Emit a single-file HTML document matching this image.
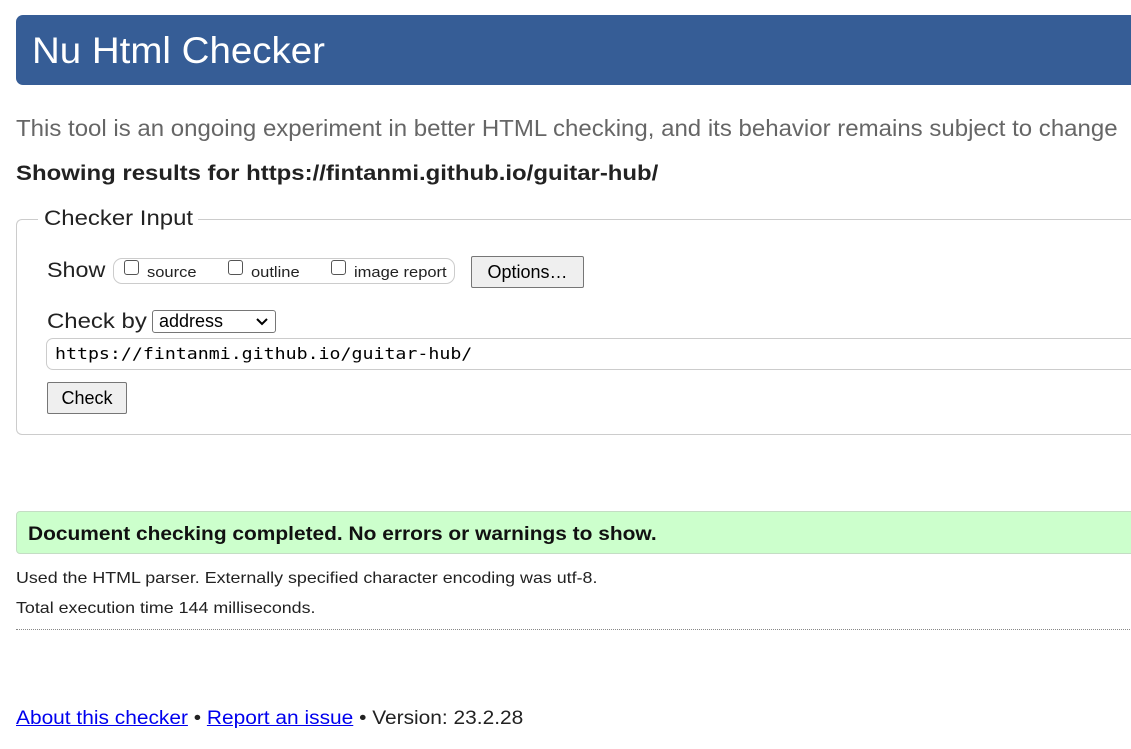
<!DOCTYPE html>
<html><head><style>
body{margin:0;width:1131px;height:749px;overflow:hidden;background:#fff;font-family:"Liberation Sans",Arial,sans-serif;position:relative}
.a{position:absolute;white-space:nowrap;transform-origin:0 0}
.cb{display:inline-block;width:13px;height:13px;border:1px solid #555;border-radius:3px;background:#fff;position:absolute}
.btn{position:absolute;background:#efefef;border:1px solid #767676;border-radius:2px;font-size:18px;color:#000;text-align:center}
</style></head><body>
<div class="a" style="left:16px;top:15px;width:1130px;height:70px;background:#365d96;border-radius:7px 0 0 7px"></div>
<div class="a" style="left:32px;top:30px;font-size:37px;color:#fff;transform:scaleX(1.04)">Nu Html Checker</div>
<div class="a" style="left:16px;top:115px;font-size:23px;color:#666;transform:scaleX(1.044)">This tool is an ongoing experiment in better HTML checking, and its behavior remains subject to change</div>
<div class="a" style="left:16px;top:162px;font-size:21px;font-weight:bold;color:#222;transform:scaleX(1.14)">Showing results for https://fintanmi.github.io/guitar-hub/</div>
<div class="a" style="left:16px;top:219px;width:1130px;height:216px;border:1px solid #ccc;border-right:none;border-radius:6px 0 0 6px;box-sizing:border-box"></div>
<div class="a" style="left:38px;top:205px;width:160px;height:28px;background:#fff"></div>
<div class="a" style="left:44px;top:207px;font-size:21px;color:#222;transform:scaleX(1.14)">Checker Input</div>
<div class="a" style="left:47px;top:259px;font-size:21px;color:#222;transform:scaleX(1.11)">Show</div>
<div class="a" style="left:113px;top:258px;width:342px;height:26px;border:1px solid #ccc;border-radius:9px;box-sizing:border-box"></div>
<span class="cb" style="left:124px;top:260px"></span><div class="a" style="left:147px;top:264px;font-size:15px;color:#222;transform:scaleX(1.1)">source</div>
<span class="cb" style="left:228px;top:260px"></span><div class="a" style="left:251px;top:264px;font-size:15px;color:#222;transform:scaleX(1.1)">outline</div>
<span class="cb" style="left:331px;top:260px"></span><div class="a" style="left:354px;top:264px;font-size:15px;color:#222;transform:scaleX(1.1)">image report</div>
<div class="btn" style="left:471px;top:256px;width:111px;height:30px;line-height:30px">Options…</div>
<div class="a" style="left:47px;top:310px;font-size:21px;color:#222;transform:scaleX(1.14)">Check by</div>
<div class="a" style="left:152px;top:310px;width:124px;height:23px;border:1px solid #767676;border-radius:3px;box-sizing:border-box;font-size:18px;line-height:21px;padding-left:6px">address<svg style="position:absolute;right:7px;top:7px" width="12" height="8" viewBox="0 0 12 8"><path d="M1 1l5 5 5-5" fill="none" stroke="#000" stroke-width="2"/></svg></div>
<div class="a" style="left:46px;top:338px;width:1100px;height:32px;border:1px solid #ccc;border-radius:7px;box-sizing:border-box"></div>
<div class="a" style="left:55px;top:344px;font-family:'DejaVu Sans Mono','Liberation Mono',monospace;font-size:16px;color:#000;transform:scaleX(1.14)">https://fintanmi.github.io/guitar-hub/</div>
<div class="btn" style="left:47px;top:382px;width:78px;height:30px;line-height:30px">Check</div>
<div class="a" style="left:16px;top:511px;width:1130px;height:43px;background:#ccffcc;border:1px solid #c4ddc4;border-radius:4px 0 0 4px;box-sizing:border-box"></div>
<div class="a" style="left:28px;top:524px;font-size:19px;font-weight:bold;color:#111;transform:scaleX(1.10)">Document checking completed. No errors or warnings to show.</div>
<div class="a" style="left:16px;top:570px;font-size:16px;color:#222;transform:scaleX(1.115)">Used the HTML parser. Externally specified character encoding was utf-8.</div>
<div class="a" style="left:16px;top:600px;font-size:16px;color:#222;transform:scaleX(1.115)">Total execution time 144 milliseconds.</div>
<div class="a" style="left:16px;top:629px;width:1120px;border-top:1px dotted #888"></div>
<div class="a" style="left:16px;top:708px;font-size:19px;color:#222;transform:scaleX(1.10)"><span style="color:#00e;text-decoration:underline">About this checker</span> • <span style="color:#00e;text-decoration:underline">Report an issue</span> • Version: 23.2.28</div>
</body></html>
